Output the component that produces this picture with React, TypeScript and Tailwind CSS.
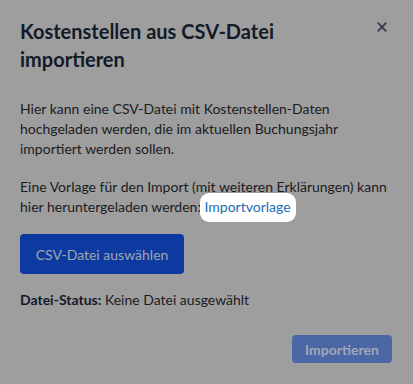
import React from "react";

export default function App() {
  return (
    <div
      className="w-[413px] h-[384px] bg-[#9e9e9e] overflow-hidden"
      style={{ fontFamily: "Lato, 'Noto Sans', sans-serif" }}
    >
      <div className="pl-5 pr-4 pt-[17px]">
        <div className="flex items-start justify-between">
          <h2 className="text-[20px] leading-[28px] font-bold text-[#131a28] w-[300px]">
            Kostenstellen aus CSV-Datei importieren
          </h2>
          <button className="mt-[5px] mr-[10px] text-[#363d4b]" aria-label="Schließen">
            <svg width="10" height="10" viewBox="0 0 10 10" fill="none" stroke="currentColor" strokeWidth="1.8" strokeLinecap="round">
              <path d="M1.2 1.2 L8.8 8.8 M8.8 1.2 L1.2 8.8" />
            </svg>
          </button>
        </div>
        <p className="mt-[26px] text-[14px] leading-[20px] text-[#1b1b1d]">
          Hier kann eine CSV-Datei mit Kostenstellen-Daten hochgeladen werden, die im aktuellen Buchungsjahr importiert werden sollen.
        </p>
        <p className="mt-[18px] text-[14px] leading-[20px] text-[#1b1b1d]">
          Eine Vorlage für den Import (mit weiteren Erklärungen) kann hier heruntergeladen werden:{" "}
          <span className="relative inline-block">
            <span className="absolute -top-[4px] -bottom-[5px] -left-[5px] -right-[5px] bg-white rounded-[9px]" />
            <a className="relative text-[#1c6db5]">Importvorlage</a>
          </span>
        </p>
        <button className="mt-[17px] w-[164px] h-[40px] rounded-[4px] bg-[#0c3aa0] text-[#a1a5af] text-[14px]">
          CSV-Datei auswählen
        </button>
        <p className="mt-[16px] text-[14px] leading-[20px] text-[#1b1b1d]">
          <span className="font-bold text-[#131a28]">Datei-Status:</span> Keine Datei ausgewählt
        </p>
        <div className="flex justify-end mt-[25px] mr-[5px]">
          <button className="w-[100px] h-[28px] rounded-[4px] bg-[#4b67a5] text-[#a2a8b5] font-bold text-[14px]">
            Importieren
          </button>
        </div>
      </div>
    </div>
  );
}
